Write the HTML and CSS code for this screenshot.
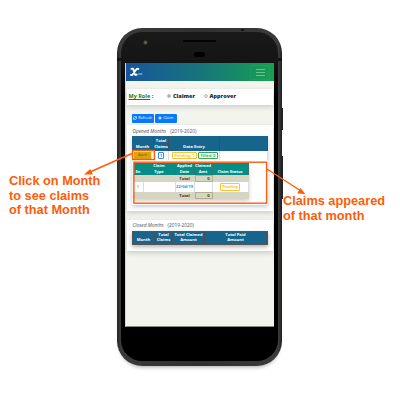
FILE: index.html
```html
<!DOCTYPE html>
<html lang="en">
<head>
<meta charset="utf-8">
<title>Claims by month</title>
<link rel="stylesheet" href="styles.css">
</head>
<body>
<main class="stage">
  <div class="phone">
    <i class="key key-power"></i><i class="key key-volume"></i>
    <i class="seam seam-left"></i><i class="seam seam-right"></i><i class="jack"></i>
    <div class="face">
      <i class="camera"></i><i class="speaker"></i><i class="sensor"></i>
      <div class="screen">
        <header class="navbar">
          <svg class="logo" viewBox="0 0 13 10"><path d="M1.500 1.800Q3 1.200 3.500 2.700L4.600 6.800Q5 8.500 6.600 7.600M8.300 1.900Q7 1.300 6 2.800L3 7Q2 8.500 1 8" fill="none" stroke="#fff" stroke-width="1.900" stroke-linecap="round"/><path d="M8.300 7h4" stroke="#c5deeb" stroke-width=".9"/></svg>
          <div class="toggler"><i></i><i></i><i></i></div>
        </header>
        <section class="card role">
          <span class="role-name"><u>My Role</u> :</span>
          <span class="radio checked"></span><b class="claimer">Claimer</b>
          <span class="radio"></span><b>Approver</b>
        </section>
        <div class="buttons">
          <span class="btn"><svg viewBox="0 0 10 10"><path d="M1 4a4 4 0 0 1 7-1M9 1v3H6M9 6a4 4 0 0 1-7 1M1 9V6h3" fill="none" stroke="#fff" stroke-width="1.700"/></svg>Refresh</span>
          <span class="btn"><svg viewBox="0 0 10 10"><path d="M5 1v8M1 5h8" stroke="#fff" stroke-width="2.600"/></svg>Claim</span>
        </div>
        <section class="card opened">
          <h2><em>Opened Months</em><span>(2019-2020)</span></h2>
          <div class="months">
            <div class="row cols-open head">
              <div>Month</div><div>Total<br>Claims</div><div>Data Entry</div><div></div>
            </div>
            <div class="row cols-open line">
              <div class="month">April</div>
              <div><span class="tag blue">1</span></div>
              <div class="entries"><span class="tag yellow">Pending: 1</span><span class="tag green">Filled: 0</span></div>
              <div></div>
            </div>
            <div class="detail">
              <div class="claims">
                <div class="row cols-claims head teal">
                  <div>Sn</div><div>Claim<br>Type</div><div>Applied<br>Date</div><div>Claimed<br>Amt</div><div>Claim Status</div>
                </div>
                <div class="row cols-claims total"><div></div><div></div><div>Total</div><div class="sum">0</div><div></div></div>
                <div class="row cols-claims line"><div>1</div><div></div><div class="date">22/04/19</div><div></div><div><span class="tag yellow">Pending</span></div></div>
                <div class="row cols-claims total"><div></div><div></div><div>Total</div><div class="sum">0</div><div></div></div>
              </div>
            </div>
          </div>
        </section>
        <section class="card closed">
          <h2><em>Closed Months</em><span>(2019-2020)</span></h2>
          <div class="row cols-closed head">
            <div>Month</div><div>Total<br>Claims</div><div>Total Claimed<br>Amount</div><div>Total Paid<br>Amount</div>
          </div>
        </section>
      </div>
    </div>
  </div>
  <svg class="marks" viewBox="0 0 400 401">
    <g fill="none" stroke="#ff5c0a" stroke-width="1.400">
      <rect x="132.700" y="150.500" width="21.700" height="9"/>
      <rect x="133.900" y="162.200" width="132.700" height="41"/>
      <path d="M132 153.500 90 172M267 169l34 22"/>
    </g>
    <path d="M84 174.600l6.200-5.600 2.700 5.600zM305.500 194.300l-8.300-1.100 3.300-5.100z" fill="#ff5c0a"/>
  </svg>
  <p class="note note-left">Click on Month<br>to see claims<br>of that Month</p>
  <p class="note note-right">Claims appeared<br>of that month</p>
</main>
</body>
</html>
```
FILE: styles.css
```css
* { box-sizing: border-box; }
body { margin: 0; background: #fff; font-family: "Open Sans", "Noto Sans", sans-serif; }
.stage { position: relative; width: 400px; height: 401px; padding: 28px 0 0 117px; overflow: hidden; }

.phone { position: relative; width: 164.500px; height: 338px; padding: 4px; border-radius: 25px; background: linear-gradient(90deg, #242424, #3a3a3a 2%, #303030 50%, #3a3a3a 98%, #202020); box-shadow: 0 4px 4px -3px rgba(0,0,0,.35); }
.face { position: relative; width: 156.500px; height: 329px; padding: 31px 4px 0; border-radius: 21px; background: linear-gradient(#191919, #151515 9%, #000 20%, #000); }
.key { position: absolute; right: -1.500px; width: 2px; background: #222; }
.key-power { top: 80px; height: 22px; }
.key-volume { top: 128px; height: 43px; }
.seam { position: absolute; top: 30px; width: 4px; height: 3px; background: #141414; }
.seam-left { left: 0; }
.seam-right { right: 0; }
.jack { position: absolute; left: 124px; top: 1px; width: 3px; height: 2px; background: #151515; }
.camera { position: absolute; left: 22px; top: 7.500px; width: 5px; height: 5px; border-radius: 50%; border: 1.500px solid #292929; background: #69614a; }
.speaker { position: absolute; left: 62px; top: 8px; width: 33px; height: 2px; border-radius: 1px; background: #030303; }
.sensor { position: absolute; left: 73px; top: 20px; width: 11px; height: 5px; border-radius: 3px; background: #000; }

.screen { width: 149px; height: 264px; overflow: hidden; background: #f3f4ee; border-left: 1.500px solid #d3d5d2; border-bottom: 1px solid #7c8e83; }
.navbar { position: relative; display: flex; justify-content: space-between; align-items: center; height: 18px; margin-left: -1px; padding: 0 4px 0 5px; background: linear-gradient(90deg, #17559b, #187080 45%, #17a052); }
.logo { width: 13px; height: 10px; }
.toggler { display: flex; flex-direction: column; align-items: center; justify-content: center; gap: 2px; width: 20px; height: 15px; border: 1px solid rgba(50,175,95,.3); border-radius: 2px; }
.toggler i { width: 9px; height: 1px; background: #70bf8c; }

.card { width: 146.500px; margin-left: .5px; background: #fff; box-shadow: 0 2px 5px rgba(60,65,60,.22); }
.role { display: flex; align-items: center; height: 16px; margin-top: 8px; padding: 0 0 2px 2px; font-size: 5.500px; font-weight: 700; color: #24292e; }
.role-name { width: 38.500px; }
.role-name u { color: #187a18; }
.radio { width: 4px; height: 4px; margin-right: 2px; border: .6px solid #bbb; border-radius: 50%; background: #f0f0f0; }
.checked { background: radial-gradient(#444 30%, #ddd 60%); }
.claimer { width: 30.500px; }

.buttons { display: flex; gap: 1.500px; margin: 9px 0 2.500px 6px; height: 8.500px; }
.btn { display: flex; align-items: center; justify-content: center; gap: 1px; width: 21.500px; border-radius: 1px; background: #0879fa; color: #fff; font-size: 3.900px; line-height: 8px; }
.btn svg { width: 4px; height: 4px; }

.opened { height: 86px; padding: 3.500px 5px 0 5.500px; }
.closed { height: 31px; margin-top: 9px; padding: 3px 5px 0 5.500px; }
h2 { display: flex; gap: 4px; height: 7.500px; margin: 0; padding-left: .5px; font-size: 4.800px; line-height: 5px; font-weight: 500; color: #4c5054; }
.months { height: 69px; box-shadow: 0 2px 4px rgba(0,0,0,.2); }
.row { display: grid; font-size: 4.100px; line-height: 5.700px; text-align: center; color: #333; }
.row > div { display: flex; align-items: center; justify-content: center; border-right: .5px solid #ddd; white-space: nowrap; }
.cols-open { grid-template-columns: 22px 15px 51px 1fr; }
.cols-closed { grid-template-columns: 22px 18px 32px 1fr; }
.cols-claims { grid-template-columns: 10px 32px 19px 18px 1fr; }
.head { height: 14.500px; background: #17658d; color: #fff; font-weight: 700; }
.head > div { align-items: flex-end; padding-bottom: 1.300px; border-color: #444f58; }
.closed .head { height: 14px; border: .5px solid #555; box-shadow: 0 2px 4px rgba(0,0,0,.3); }
.line { height: 9.500px; }
.row > .month { margin: 1px 2px; background: #dda50c; color: #614c10; }
.row > .entries { gap: 1.500px; padding-left: 2px; }
.tag { display: block; padding: 0 1.300px; border: .7px solid; border-radius: 1px; line-height: 5.500px; font-size: 3.900px; font-weight: 700; }
.blue { color: #3687ef; }
.yellow { color: #ffc22c; }
.green { color: #36ad55; }
.detail { padding: 2.500px 0 0 1.500px; }
.claims { width: 115px; box-shadow: 0 2px 4px rgba(0,0,0,.2); }
.teal { height: 12px; background: #058d87; line-height: 5.200px; }
.claims .teal > div { padding-bottom: .7px; border-color: #33776f; }
.claims .teal { font-size: 4px; }
.total { height: 7.500px; background: #d6d5c2; font-weight: 700; }
.row.total > div { border-color: transparent; }
.row.total > .sum { justify-content: flex-end; padding-right: 2px; border: .7px solid #b3b28e; }
.row > .date { color: #328ee5; font-size: 4px; font-weight: 700; }

.marks { position: absolute; left: 0; top: 0; width: 400px; height: 401px; }
.note { position: absolute; margin: 0; color: #ff5c0a; font: 700 12.750px/14.700px "Liberation Sans", Arial, sans-serif; white-space: nowrap; }
.note-left { left: 9px; top: 174px; }
.note-right { left: 283px; top: 194px; }
```
